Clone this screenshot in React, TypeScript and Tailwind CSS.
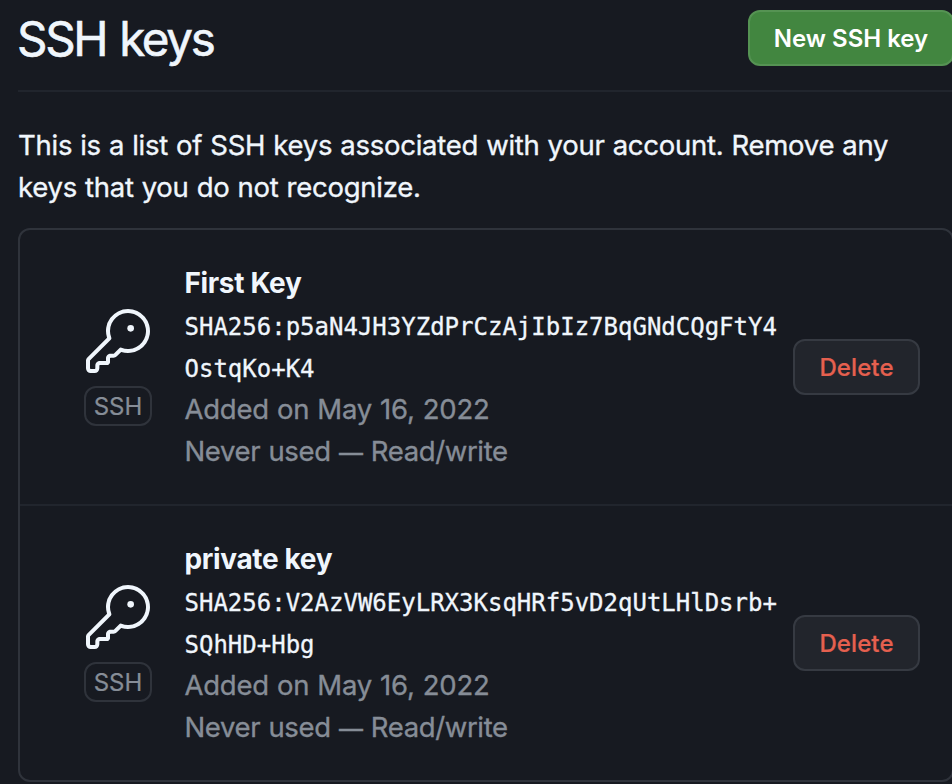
import React from "react";

type SshKey = { name: string; fingerprint: [string, string] };

const keys: SshKey[] = [
  { name: "First Key", fingerprint: ["SHA256:p5aN4JH3YZdPrCzAjIbIz7BqGNdCQgFtY4", "OstqKo+K4"] },
  { name: "private key", fingerprint: ["SHA256:V2AzVW6EyLRX3KsqHRf5vD2qUtLHlDsrb+", "SQhHD+Hbg"] },
];

function KeyIcon() {
  return (
    <svg viewBox="0 0 24 24" className="size-[64px]" fill="currentColor" aria-hidden="true">
      <path d="M16.75 8.5a1.25 1.25 0 1 0 0-2.5 1.25 1.25 0 0 0 0 2.5Z" />
      <path d="M15.75 0a8.25 8.25 0 1 1-2.541 16.101l-1.636 1.636a1.744 1.744 0 0 1-1.237.513H9.25a.25.25 0 0 0-.25.25v1.448a.876.876 0 0 1-.256.619l-.214.213a.75.75 0 0 1-.545.22H5.25a.25.25 0 0 0-.25.25v1A1.75 1.75 0 0 1 3.25 24h-1.5A1.75 1.75 0 0 1 0 22.25v-2.836c0-.464.185-.908.513-1.236l7.386-7.388A8.249 8.249 0 0 1 15.75 0ZM9 8.25a6.733 6.733 0 0 0 .463 2.462.75.75 0 0 1-.168.804l-7.722 7.721a.25.25 0 0 0-.073.177v2.836c0 .138.112.25.25.25h1.5a.25.25 0 0 0 .25-.25v-1c0-.966.784-1.75 1.75-1.75H7.5v-1c0-.966.784-1.75 1.75-1.75h1.086a.25.25 0 0 0 .177-.073l1.971-1.972a.75.75 0 0 1 .804-.168A6.75 6.75 0 1 0 9 8.25Z" />
    </svg>
  );
}

function KeyRow({ item }: { item: SshKey }) {
  return (
    <li className="flex h-[276px] items-center border-b-2 border-[#21252d] last:h-[274px] last:border-b-0">
      <div className="ml-[64px] flex w-[68px] shrink-0 flex-col items-center gap-[13px]">
        <KeyIcon />
        <span className="flex h-10 w-[68px] items-center justify-center rounded-[12px] border-2 border-[#2f333b] pt-[2px] text-[24px] text-[#868d97] [-webkit-text-stroke:0.2px_#868d97]">SSH</span>
      </div>
      <div className="ml-[32.5px] w-[608.5px] text-[28px] leading-[42px] whitespace-nowrap text-[#868d97]">
        <h2 className="font-[650] tracking-[-0.35px] text-[#f0f6fc]">{item.name}</h2>
        <code className="block pt-[2px] font-['DejaVu_Sans_Mono',monospace] text-[24px] text-[#f0f6fc] [-webkit-text-stroke:0.3px_#f0f6fc]">
          {item.fingerprint[0]}<br />{item.fingerprint[1]}
        </code>
        <p className="-mt-[2px] text-[27.5px] tracking-[-0.23px] [word-spacing:0.6px] [-webkit-text-stroke:0.35px_#868d97]">Added on May 16, 2022</p>
        <p className="text-[27.5px] tracking-[-0.35px] [word-spacing:0.8px] [-webkit-text-stroke:0.35px_#868d97]">
          Never used <span className="text-[24px] leading-none">—</span> Read/write
        </p>
      </div>
      <button className="h-14 w-[127px] shrink-0 rounded-[12px] border-2 border-[#363a42] bg-[#22252c] pt-[2px] text-[24px] font-medium tracking-[0.1px] text-[#e5604f] [-webkit-text-stroke:0.2px_#e5604f]">Delete</button>
    </li>
  );
}

export default function App() {
  return (
    <main className="h-[784px] w-[952px] overflow-hidden bg-[#171a21] pl-[18px] font-['Inter',sans-serif] text-[#f0f6fc]">
      <header className="flex h-[92px] w-[936px] justify-between border-b-2 border-[#21252d] pt-[10px]">
        <h1 className="-mt-px -ml-px text-[47.5px] leading-[60px] tracking-[-2.35px] whitespace-nowrap [word-spacing:2px] [-webkit-text-stroke:0.6px_#f0f6fc]">SSH keys</h1>
        <button className="h-14 w-[206px] rounded-[12px] border-2 border-[#559353] bg-[#428640] pt-[2px] text-[24px] font-semibold text-white">New SSH key</button>
      </header>
      <p className="pt-[32px] text-[27.5px] leading-[42px] tracking-[-0.26px] whitespace-nowrap [word-spacing:0.6px] [-webkit-text-stroke:0.35px_#f0f6fc]">
        This is a list of SSH keys associated with your account. Remove any<br />keys that you do not recognize.
      </p>
      <ul className="mt-[20px] h-[554px] w-[936px] rounded-[12px] border-2 border-[#2f333b]">
        {keys.map((item) => <KeyRow key={item.name} item={item} />)}
      </ul>
    </main>
  );
}
